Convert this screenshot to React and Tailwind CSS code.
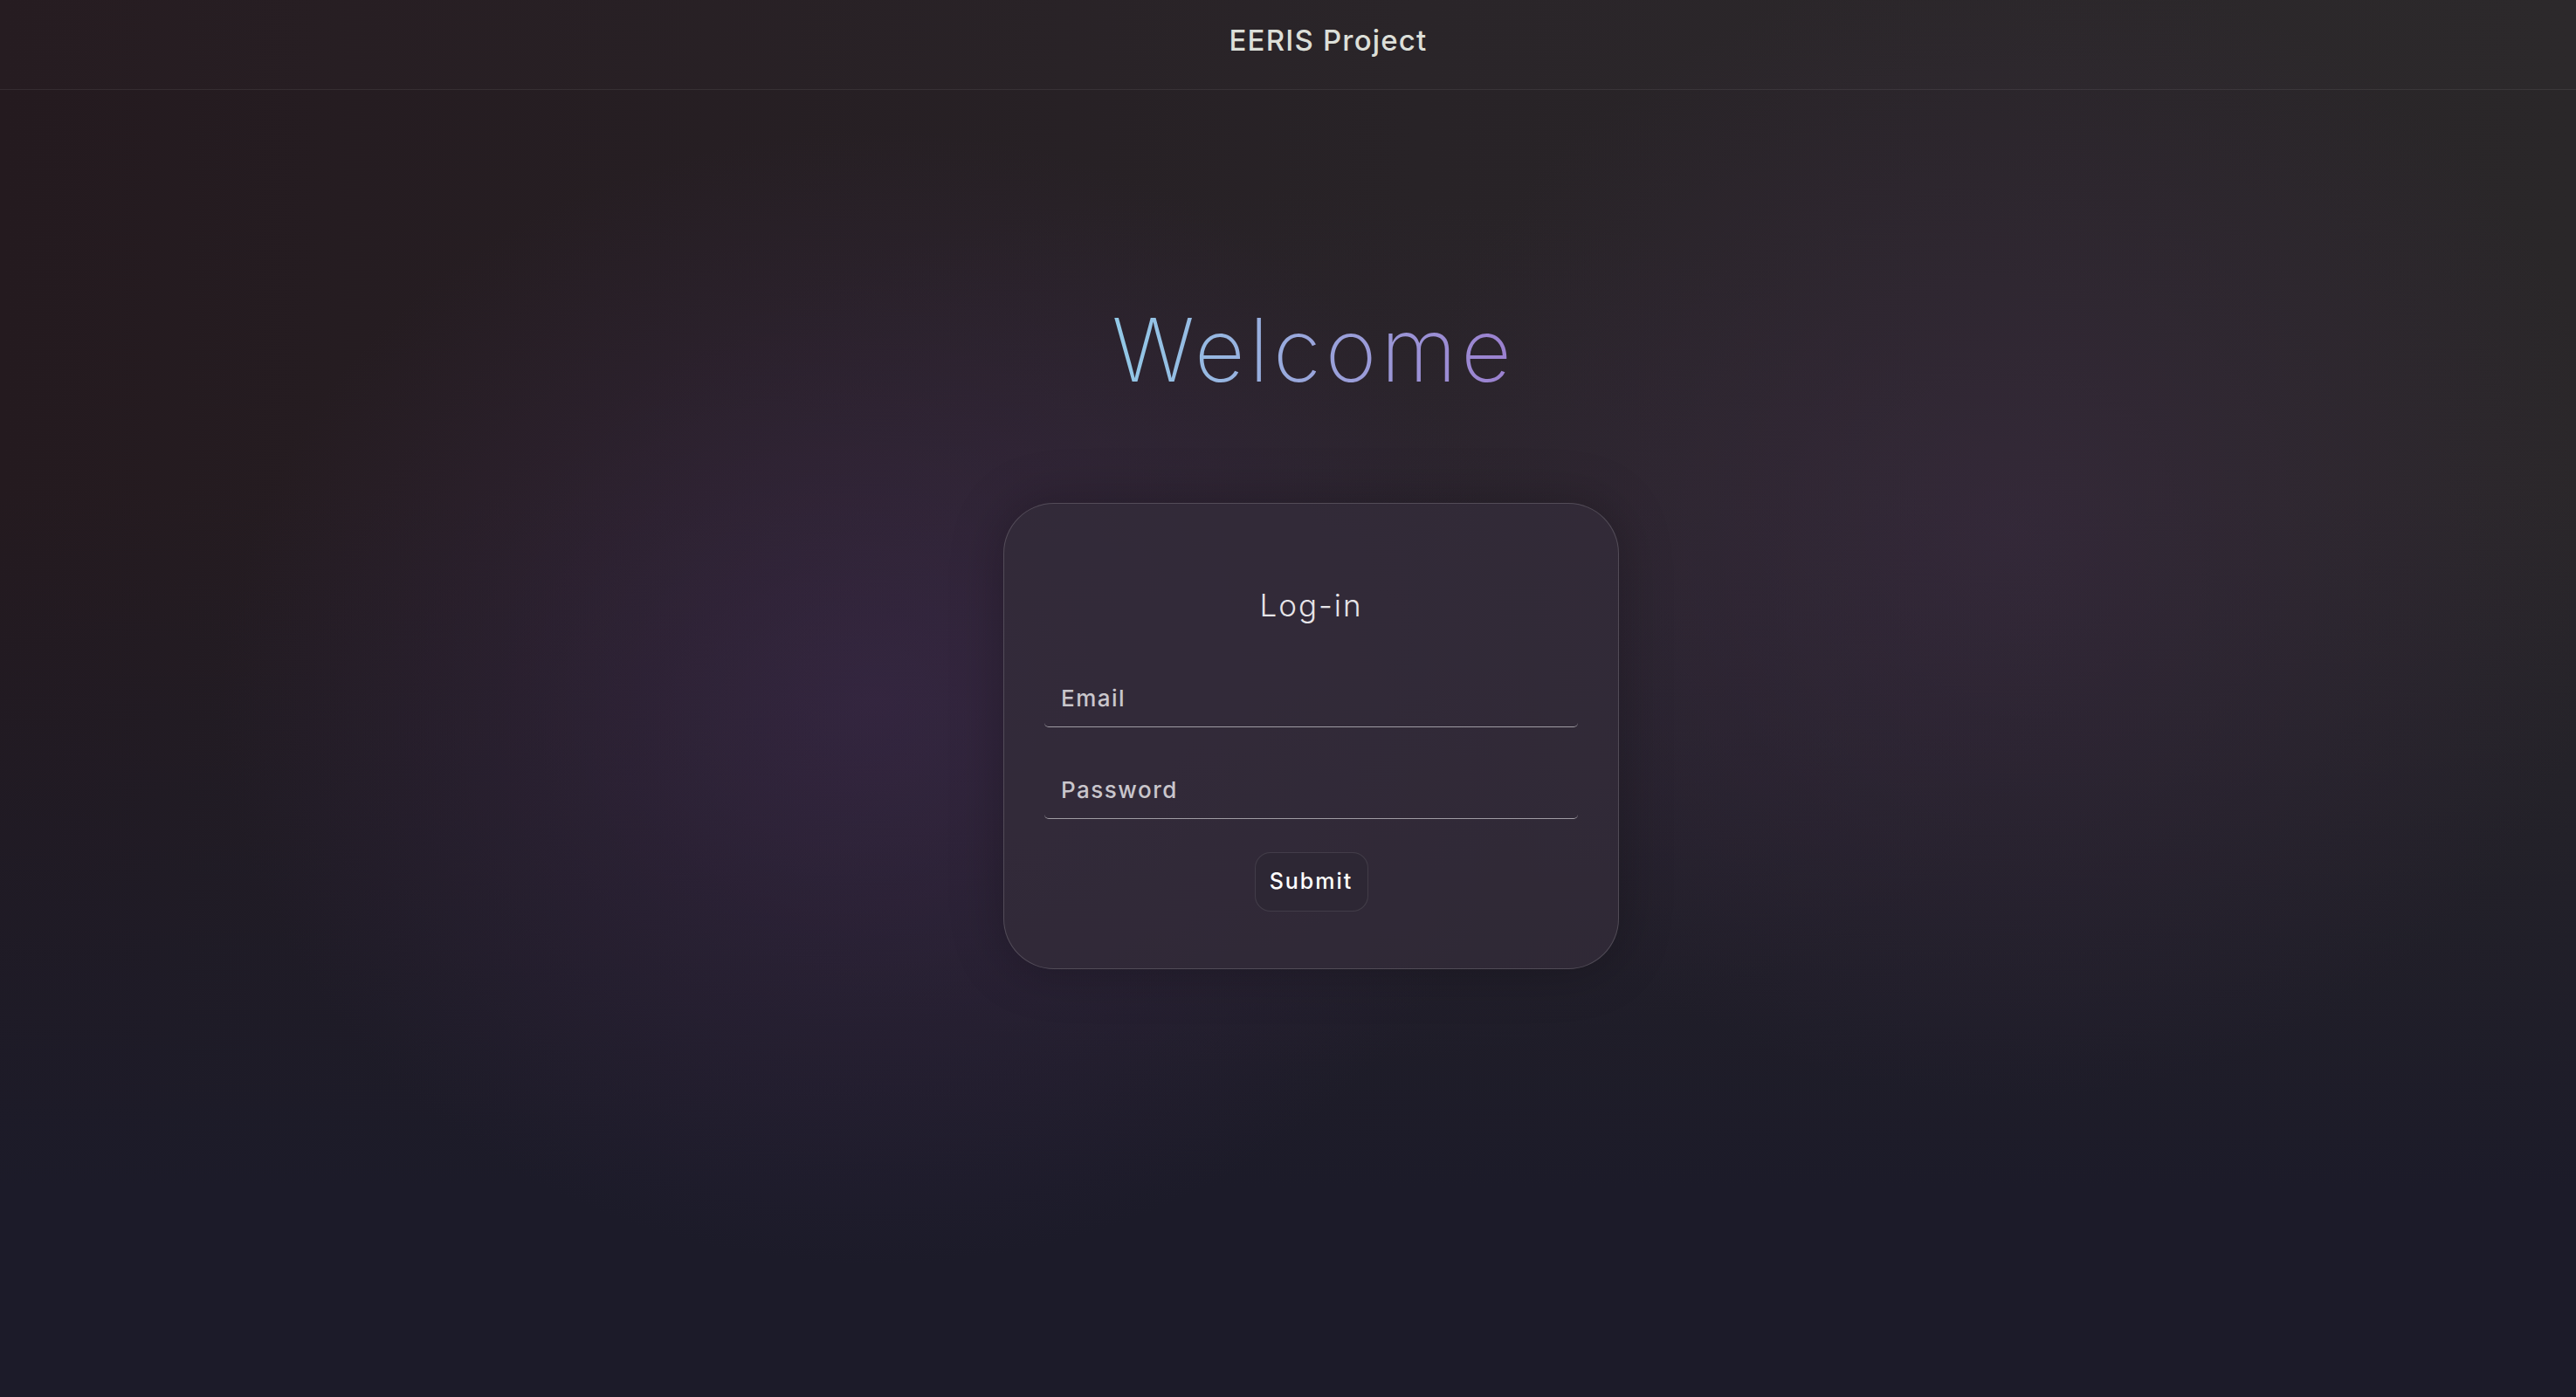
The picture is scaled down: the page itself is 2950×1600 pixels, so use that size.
import React from "react";

export default function App() {
  return (
    <div className="min-h-screen w-full flex flex-col font-['Inter',sans-serif] bg-[radial-gradient(ellipse_750px_650px_at_34%_50%,rgba(62,42,80,0.55),transparent),radial-gradient(ellipse_700px_650px_at_78%_38%,rgba(62,44,72,0.5),transparent),radial-gradient(ellipse_900px_500px_at_50%_45%,rgba(55,42,68,0.35),transparent),linear-gradient(to_bottom,transparent_35%,#1c1b29_85%),linear-gradient(to_right,#241a1f,#282327_55%,#2a2729)]">
      <header className="h-[103px] shrink-0 flex items-center justify-center border-b border-white/[0.07] bg-white/[0.01] pb-[8px]">
        <span className="pl-[92px] text-[33px] font-medium tracking-[1.2px] text-[#dcdfd8]">EERIS Project</span>
      </header>
      <main className="flex flex-col items-center">
        <h1 className="mt-[248px] pl-[59px] text-[100px] leading-none font-extralight tracking-[5px] bg-gradient-to-r from-[#8fd3ea] to-[#9b7fcf] bg-clip-text text-transparent">
          Welcome
        </h1>
        <div className="mt-[125px] pl-[53px]">
          <form
            onSubmit={(e) => e.preventDefault()}
            className="w-[705px] rounded-[58px] border border-white/[0.16] bg-[#332c3a]/80 shadow-[0_0_60px_rgba(0,0,0,0.25)] pt-[99px] pb-[65px] px-[46px] flex flex-col items-center"
          >
            <h2 className="text-[35px] leading-none font-light tracking-[2px] text-[#e6e4e8]">Log-in</h2>
            <input
              type="email"
              placeholder="Email"
              className="mt-[55px] w-full h-[67px] bg-transparent border-b border-[#9f9ba3] rounded-b-[5px] pl-[19px] text-[26px] font-medium tracking-[1.5px] text-white placeholder:text-[#c9c6cc] outline-none"
            />
            <input
              type="password"
              placeholder="Password"
              className="mt-[38px] w-full h-[67px] bg-transparent border-b border-[#9f9ba3] rounded-b-[5px] pl-[19px] text-[26px] font-medium tracking-[1.5px] text-white placeholder:text-[#c9c6cc] outline-none"
            />
            <button
              type="submit"
              className="mt-[38px] w-[130px] h-[68px] rounded-[18px] border border-white/[0.1] bg-[#2c2632]/60 text-[25px] font-medium tracking-[2px] text-white"
            >
              Submit
            </button>
          </form>
        </div>
      </main>
    </div>
  );
}
